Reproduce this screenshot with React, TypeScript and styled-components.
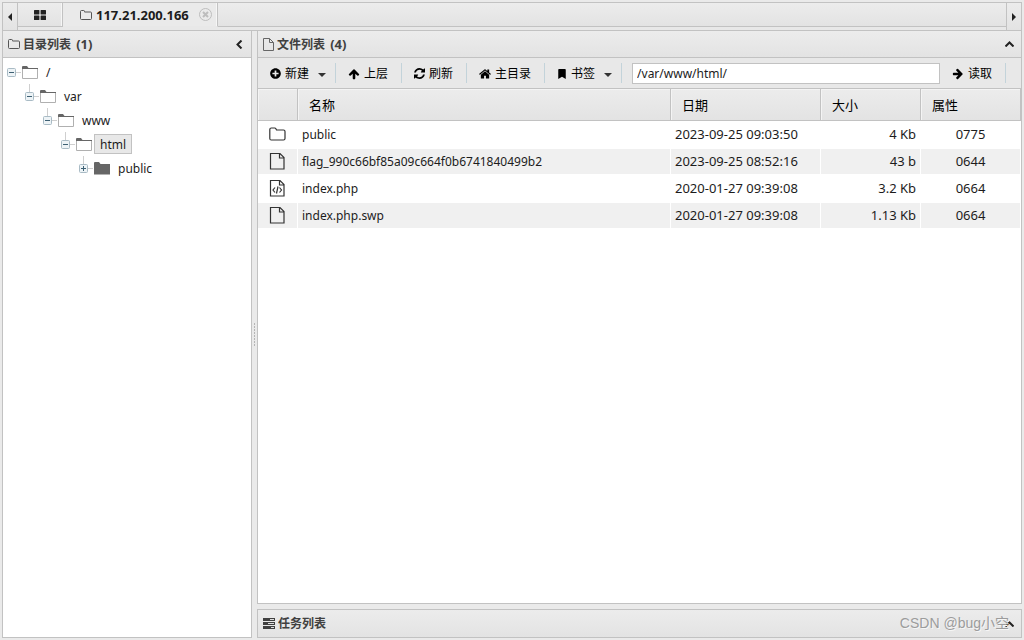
import React, { useState } from 'react';
import styled, { createGlobalStyle, css } from 'styled-components';
import { FaPlusCircle, FaBookmark } from 'react-icons/fa';

const line = '#c2c2c2';
const chrome = 'linear-gradient(#ececec, #e3e3e3)';

const GlobalStyle = createGlobalStyle`
  * { box-sizing: border-box; }
  body {
    margin: 0;
    background: #eaeaea;
    color: #1c1c1c;
    font: 13px/18px "Noto Sans", "Noto Sans CJK SC", sans-serif;
  }
  button {
    padding: 0;
    border: 0;
    background: none;
    color: inherit;
    font: inherit;
    cursor: pointer;
  }
  svg { display: block; flex: none; }
`;

const Page = styled.div`
  display: flex;
  flex-direction: column;
  height: 100vh;
  padding: 2px;
`;

const TabBar = styled.nav`
  display: flex;
  flex: none;
  height: 29px;
  border: 1px solid ${line};
  background: #e8e8e8;
`;

const ScrollButton = styled.button<{ $side: 'left' | 'right' }>`
  display: flex;
  align-items: center;
  justify-content: center;
  width: 15px;
  background: ${chrome};
  ${({ $side }) =>
    $side === 'left'
      ? css`border-right: 1px solid ${line};`
      : css`border-left: 1px solid ${line};`}
`;

const TabStrip = styled.div`
  display: flex;
  flex: 1;
  min-width: 0;
`;

const Tab = styled.div<{ $active?: boolean }>`
  display: flex;
  align-items: center;
  height: 24px;
  border-right: 1px solid ${line};
  border-bottom: 1px solid ${({ $active }) => ($active ? '#e8e8e8' : line)};
  background: ${({ $active }) => ($active ? '#eaeaea' : chrome)};
  box-shadow: inset -1px 0 #f6f6f6;
  padding: ${({ $active }) => ($active ? '0 5px 0 17px' : '0 16px')};
`;

const TabLabel = styled.button`
  display: flex;
  align-items: center;
  gap: 4px;
  font-weight: 700;
`;

const CloseButton = styled.button`
  margin-left: 10px;
`;

const TabFiller = styled.div`
  flex: 1;
  height: 24px;
  border-bottom: 1px solid ${line};
  background: ${chrome};
`;

const Workspace = styled.main`
  display: flex;
  flex: 1;
  min-height: 0;
`;

const Sidebar = styled.aside`
  flex: none;
  width: 250px;
  border: 1px solid ${line};
  border-top: 0;
  background: #fff;
`;

const Splitter = styled.div`
  display: flex;
  align-items: center;
  justify-content: center;
  width: 5px;
`;

const Content = styled.div`
  display: flex;
  flex: 1;
  flex-direction: column;
  gap: 5px;
  min-width: 0;
`;

const FilePanel = styled.section`
  flex: 1;
  min-height: 0;
  border: 1px solid ${line};
  border-top: 0;
  background: #fff;
`;

const TaskPanel = styled.section`
  position: relative;
  flex: none;
  border: 1px solid ${line};
`;

const PanelHeader = styled.header<{ $plain?: boolean }>`
  display: flex;
  align-items: center;
  gap: 3px;
  height: 27px;
  padding: 0 7px 0 5px;
  border-bottom: ${({ $plain }) => ($plain ? '0' : `1px solid ${line}`)};
  background: ${chrome};
  color: #404040;
`;

const PanelTitle = styled.h2`
  flex: 1;
  margin: 0;
  font-size: 12px;
  font-weight: 700;
  line-height: 18px;
`;

const Count = styled.span`
  margin-left: 2px;
  font-size: 13px;
`;

const Watermark = styled.span`
  position: absolute;
  right: 12px;
  top: 3px;
  color: #9c9c9c;
  font: 14px/20px "Liberation Sans", "Noto Sans CJK SC", sans-serif;
  text-shadow: 1px 1px #f6f6f6;
`;

const Tree = styled.ul`
  margin: 0;
  padding: 2px 0 0 4px;
  list-style: none;
`;

const TreeRow = styled.li<{ $level: number }>`
  display: flex;
  align-items: center;
  height: 24px;
  padding-left: ${({ $level }) => $level * 18}px;
`;

const TreeLabel = styled.button<{ $selected: boolean }>`
  height: 20px;
  margin-left: 2px;
  padding: 1px 5px 0;
  border: 1px solid ${({ $selected }) => ($selected ? line : 'transparent')};
  background: ${({ $selected }) => ($selected ? '#e8e8e8' : 'transparent')};
  font-size: 12px;
`;

const Toolbar = styled.div`
  display: flex;
  align-items: center;
  height: 31px;
  border-bottom: 1px solid ${line};
  background: #e8e8e8;
  color: #000;
  font-size: 12px;
`;

const ToolButton = styled.button`
  display: flex;
  align-items: center;
  gap: 4px;
  padding: 1px 13px 0 12px;
  height: 20px;
  border-right: 1px solid #c3d3da;
  white-space: nowrap;
`;

const Caret = styled.span`
  margin: 2px -4px 0 5px;
  border: 4px solid transparent;
  border-top-color: #333;
  border-bottom: 0;
`;

const PathInput = styled.input`
  flex: 1;
  min-width: 0;
  height: 21px;
  margin-left: 10px;
  padding: 0 4px;
  border: 1px solid ${line};
  background: #fff;
  color: #1c1c1c;
  font: 12px/18px "Noto Sans", "Noto Sans CJK SC", sans-serif;
`;

const ToolbarEnd = styled.div`
  width: 15px;
`;

const FileTable = styled.table`
  width: 100%;
  table-layout: fixed;
  border-collapse: separate;
  border-spacing: 0;
`;

const HeadCell = styled.th`
  height: 32px;
  padding: 0 11px;
  border-right: 1px solid ${line};
  border-bottom: 1px solid ${line};
  background: ${chrome};
  box-shadow: inset 1px 1px #f4f4f4;
  color: #000;
  font-weight: 400;
  text-align: left;
`;

const FileRow = styled.tr`
  &:nth-child(even) { background: #f0f0f0; }
`;

const Cell = styled.td<{ $align?: 'right' | 'center' }>`
  height: 27px;
  padding: 0 4px 2px;
  border: 1px solid #fff;
  border-left: 0;
  text-align: ${({ $align }) => $align ?? 'left'};
  white-space: nowrap;
`;

const IconCell = styled(Cell)`
  padding: 0 0 1px 11px;
`;

const NameCell = styled(Cell)`
  padding: 0 4px;
  font-size: 12px;
`;

const FolderOutline = () => (
  <svg width="12" height="12" viewBox="0 0 12 12" fill="none" stroke="#555">
    <path d="M.5 9.500v-7q0-1 1-1h2.200q.8 0 .8 1v.5h6q1 0 1 1v5.500q0 1-1 1h-9q-1 0-1-1z" />
  </svg>
);

const FileOutline = () => (
  <svg width="11" height="13" viewBox="0 0 11 13" fill="none" stroke="#666">
    <path d="M.5.5h6l4 4v8H.5zM6.500.5v4h4" />
  </svg>
);

const TasksIcon = () => (
  <svg width="12" height="11" viewBox="0 0 12 11" fill="#404040">
    <path d="M0 0h12v3H0zM0 4h12v3H0zM0 8h12v3H0z" />
    <path d="M7 1h4v1H7zM5 5h6v1H5zM8 9h3v1H8z" fill="#ddd" />
  </svg>
);

const GridIcon = () => (
  <svg width="12" height="10" viewBox="0 0 12 10" fill="#222">
    <rect width="5.400" height="4.400" rx=".5" />
    <rect x="6.600" width="5.400" height="4.400" rx=".5" />
    <rect y="5.600" width="5.400" height="4.400" rx=".5" />
    <rect x="6.600" y="5.600" width="5.400" height="4.400" rx=".5" />
  </svg>
);

const CloseIcon = () => (
  <svg width="13" height="13" viewBox="0 0 13 13" fill="none" stroke="#bdbdbd">
    <circle cx="6.500" cy="6.500" r="6" />
    <path d="M4 4l5 5M9 4l-5 5" strokeWidth="2" />
  </svg>
);

const RefreshIcon = () => (
  <svg width="11" height="11" viewBox="0 128 1536 1536" fill="currentColor">
    <path d="M1511 1056q0 5-1 7-64 268-268 434.500T764 1664q-146 0-282.500-55T238 1452l-129 129q-19 19-45 19t-45-19-19-45v-448q0-26 19-45t45-19h448q26 0 45 19t19 45-19 45l-137 137q71 66 161 102t187 36q134 0 250-65t186-179q11-17 53-117 8-23 30-23h192q13 0 22.500 9.500t9.500 22.500zm25-800v448q0 26-19 45t-45 19h-448q-26 0-45-19t-19-45 19-45l138-138q-148-137-349-137-134 0-250 65T332 628q-11 17-53 117-8 23-30 23H50q-13 0-22.500-9.500T18 736v-7q65-268 270-434.500T768 128q146 0 284 55.500T1297 340l130-129q19-19 45-19t45 19 19 45z" />
  </svg>
);

const ArrowIcon = ({ to }: { to: 'up' | 'right' }) => (
  <svg width="12" height="12" viewBox="0 0 1792 1792" fill="currentColor">
    <path
      transform={to === 'right' ? 'rotate(90 896 896)' : undefined}
      d="M1675 971q0 51-37 90l-75 75q-38 38-91 38-54 0-90-38L1088 843v704q0 52-37.500 84.500T960 1664H832q-53 0-90.500-32.500T704 1547V843l-294 293q-36 38-90 38t-90-38l-75-75q-38-38-38-90 0-53 38-91l651-651q35-37 90-37 54 0 91 37l651 651q37 39 37 91z"
    />
  </svg>
);

const HomeIcon = () => (
  <svg width="12" height="12" viewBox="64 64 1664 1664" fill="currentColor">
    <path d="M1472 992v480q0 26-19 45t-45 19h-384v-384H768v384H384q-26 0-45-19t-19-45V992q0-1 .5-3t.5-3l575-474 575 474q1 2 1 6zm223-69l-62 74q-8 9-21 11h-3q-13 0-21-7L896 424l-692 577q-12 8-24 7-13-2-21-11l-62-74q-8-10-7-23.500T101 878l719-599q32-26 76-26t76 26l244 204V288q0-14 9-23t23-9h192q14 0 23 9t9 23v408l219 182q10 8 11 21.500t-7 23.500z" />
  </svg>
);

const Triangle = ({ flip }: { flip?: boolean }) => (
  <svg width="4" height="8" viewBox="0 0 4 8" fill="#222">
    <path d={flip ? 'M0 0l4 4-4 4z' : 'M4 0L0 4l4 4z'} />
  </svg>
);

const ChevronLeft = () => (
  <svg width="8" height="9" viewBox="0 0 8 9" fill="none" stroke="#222" strokeWidth="2">
    <path d="M5.500 .5L1.500 4.500l4 4" />
  </svg>
);

const ChevronUp = () => (
  <svg width="9" height="6" viewBox="0 0 9 6" fill="none" stroke="#222" strokeWidth="2">
    <path d="M.5 5.500l4-4 4 4" />
  </svg>
);

const GripIcon = () => (
  <svg width="1" height="24" viewBox="0 0 1 24" stroke="#b5b5b5" strokeDasharray="2 1">
    <path d="M.5 0v24" />
  </svg>
);

const BranchIcon = ({ open, root }: { open: boolean; root: boolean }) => (
  <svg width="15" height="24" viewBox="0 0 15 24" fill="none" stroke="#cfcfcf">
    <path d={root ? 'M8 12.500h6' : 'M4.500 0v8M8 12.500h6'} />
    <rect x=".5" y="8.500" width="8" height="8" rx="1" fill="#edf3f6" stroke="#a9bbc5" />
    <path d={open ? 'M2 12.500h5' : 'M2 12.500h5M4.500 10v5'} stroke="#3d6073" />
  </svg>
);

const TreeFolder = ({ open }: { open: boolean }) => (
  <svg width="16" height="13" viewBox="0 0 16 13">
    {open ? (
      <>
        <path d="M.5 2.500v10h15v-10" fill="#fff" stroke="#b0b0b0" />
        <path d="M0 1q0-1 1-1h4l1.500 2H16v1H0z" fill="#666" />
      </>
    ) : (
      <path d="M0 1q0-1 1-1h4l1.500 2H16v10.500H0z" fill="#666" />
    )}
  </svg>
);

const RowIcon = ({ kind }: { kind: FileEntry['kind'] }) => (
  <svg width="18" height="18" viewBox="0 0 18 18" fill="none" stroke="#333" strokeWidth="1.200">
    {kind === 'folder' ? (
      <path d="M.8 13.500v-9q0-1.500 1.500-1.500h3.400q.8 0 1.200.8l.6 1.200h7q1.500 0 1.500 1.500v7q0 1.500-1.500 1.500H2.300q-1.500 0-1.500-1.500z" />
    ) : (
      <path d="M1.500 1.500h9.500l4 4v11.500H1.500zM10.500 1.500v4.500H15" />
    )}
    {kind === 'code' && <path d="M6 8.500L4 11l2 2.500M10.500 8.500l2 2.500-2 2.500M9 7.500l-1.500 7" />}
  </svg>
);

interface FileEntry {
  kind: 'folder' | 'file' | 'code';
  name: string;
  date: string;
  size: string;
  mode: string;
}

const files: FileEntry[] = [
  { kind: 'folder', name: 'public', date: '2023-09-25 09:03:50', size: '4 Kb', mode: '0775' },
  { kind: 'file', name: 'flag_990c66bf85a09c664f0b6741840499b2', date: '2023-09-25 08:52:16', size: '43 b', mode: '0644' },
  { kind: 'code', name: 'index.php', date: '2020-01-27 09:39:08', size: '3.2 Kb', mode: '0664' },
  { kind: 'file', name: 'index.php.swp', date: '2020-01-27 09:39:08', size: '1.13 Kb', mode: '0664' },
];

const folders = ['/', 'var', 'www', 'html', 'public'];

export default function App() {
  const [selected, setSelected] = useState('html');
  const [path, setPath] = useState('/var/www/html/');

  return (
    <Page>
      <GlobalStyle />
      <TabBar>
        <ScrollButton $side="left" aria-label="向左滚动"><Triangle /></ScrollButton>
        <TabStrip>
          <Tab><TabLabel aria-label="主页"><GridIcon /></TabLabel></Tab>
          <Tab $active>
            <TabLabel><FolderOutline />117.21.200.166</TabLabel>
            <CloseButton aria-label="关闭"><CloseIcon /></CloseButton>
          </Tab>
          <TabFiller />
        </TabStrip>
        <ScrollButton $side="right" aria-label="向右滚动"><Triangle flip /></ScrollButton>
      </TabBar>
      <Workspace>
        <Sidebar>
          <PanelHeader>
            <FolderOutline />
            <PanelTitle>目录列表 <Count>(1)</Count></PanelTitle>
            <button aria-label="收起目录"><ChevronLeft /></button>
          </PanelHeader>
          <Tree>
            {folders.map((name, level) => {
              const open = level < folders.length - 1;
              return (
                <TreeRow key={name} $level={level}>
                  <button aria-label={`${open ? '收起' : '展开'} ${name}`}>
                    <BranchIcon open={open} root={level === 0} />
                  </button>
                  <TreeFolder open={open} />
                  <TreeLabel $selected={name === selected} onClick={() => setSelected(name)}>
                    {name}
                  </TreeLabel>
                </TreeRow>
              );
            })}
          </Tree>
        </Sidebar>
        <Splitter><GripIcon /></Splitter>
        <Content>
          <FilePanel>
            <PanelHeader>
              <FileOutline />
              <PanelTitle>文件列表 <Count>(4)</Count></PanelTitle>
              <button aria-label="收起文件列表"><ChevronUp /></button>
            </PanelHeader>
            <Toolbar>
              <ToolButton><FaPlusCircle size={11} />新建<Caret /></ToolButton>
              <ToolButton><ArrowIcon to="up" />上层</ToolButton>
              <ToolButton><RefreshIcon />刷新</ToolButton>
              <ToolButton><HomeIcon />主目录</ToolButton>
              <ToolButton><FaBookmark size={10} />书签<Caret /></ToolButton>
              <PathInput
                aria-label="路径"
                value={path}
                onChange={(event) => setPath(event.target.value)}
              />
              <ToolButton><ArrowIcon to="right" />读取</ToolButton>
              <ToolbarEnd />
            </Toolbar>
            <FileTable>
              <colgroup>
                <col style={{ width: 40 }} />
                <col />
                <col style={{ width: 150 }} />
                <col style={{ width: 100 }} />
                <col style={{ width: 100 }} />
              </colgroup>
              <thead>
                <tr>
                  <HeadCell aria-label="类型" />
                  <HeadCell>名称</HeadCell>
                  <HeadCell>日期</HeadCell>
                  <HeadCell>大小</HeadCell>
                  <HeadCell>属性</HeadCell>
                </tr>
              </thead>
              <tbody>
                {files.map((file) => (
                  <FileRow key={file.name}>
                    <IconCell><RowIcon kind={file.kind} /></IconCell>
                    <NameCell>{file.name}</NameCell>
                    <Cell>{file.date}</Cell>
                    <Cell $align="right">{file.size}</Cell>
                    <Cell $align="center">{file.mode}</Cell>
                  </FileRow>
                ))}
              </tbody>
            </FileTable>
          </FilePanel>
          <TaskPanel>
            <PanelHeader $plain>
              <TasksIcon />
              <PanelTitle>任务列表</PanelTitle>
              <button aria-label="展开任务列表"><ChevronUp /></button>
            </PanelHeader>
            <Watermark>CSDN @bug小空</Watermark>
          </TaskPanel>
        </Content>
      </Workspace>
    </Page>
  );
}
